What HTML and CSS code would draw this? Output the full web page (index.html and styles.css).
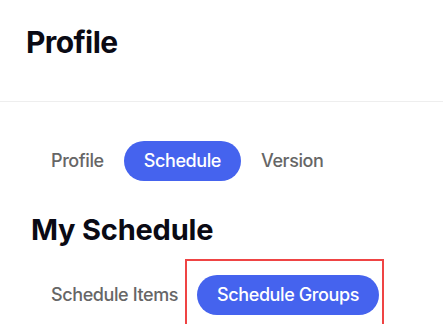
FILE: index.html
```html
<!DOCTYPE html>
<html>
<head>
<meta charset="utf-8">
<link rel="stylesheet" href="styles.css">
</head>
<body>
<header class="page-header">
  <h1 class="page-title">Profile</h1>
</header>
<main class="content">
  <nav class="tabs">
    <span class="tab">Profile</span>
    <span class="tab tab-active">Schedule</span>
    <span class="tab">Version</span>
  </nav>
  <h2 class="section-title">My Schedule</h2>
  <nav class="tabs sub-tabs">
    <span class="tab">Schedule Items</span>
    <div class="highlight">
      <span class="tab tab-active">Schedule Groups</span>
    </div>
  </nav>
</main>
</body>
</html>
```
FILE: styles.css
```css
* { box-sizing: border-box; }
html, body { margin: 0; padding: 0; background: #fff; }
body {
  font-family: Inter, "Noto Sans", sans-serif;
  width: 443px;
  height: 324px;
  overflow: hidden;
}
.page-header {
  height: 102px;
  border-bottom: 1px solid #eeeeee;
  padding: 24px 0 0 26px;
}
.page-title {
  margin: 0;
  font-size: 30px;
  line-height: 36px;
  font-weight: 700;
  color: #0a0a14;
  letter-spacing: -0.6px;
}
.content {
  padding: 39px 0 0 31px;
}
.tabs {
  display: flex;
  align-items: center;
}
.tab {
  display: inline-block;
  padding: 8px 20px;
  font-size: 18px;
  line-height: 24px;
  font-weight: 500;
  color: #666666;
  border-radius: 20px;
  white-space: nowrap;
  letter-spacing: -0.4px;
}
.tab-active {
  background: #4563ee;
  color: #ffffff;
}
.section-title {
  margin: 31px 0 0 0;
  font-size: 29px;
  line-height: 36px;
  font-weight: 700;
  color: #0a0a14;
  letter-spacing: -0.2px;
}
.sub-tabs {
  margin-top: 11px;
}
.highlight {
  margin-left: -13px;
  border: 2px solid #ef4444;
  padding: 14px 3px 14px 10px;
}
```
